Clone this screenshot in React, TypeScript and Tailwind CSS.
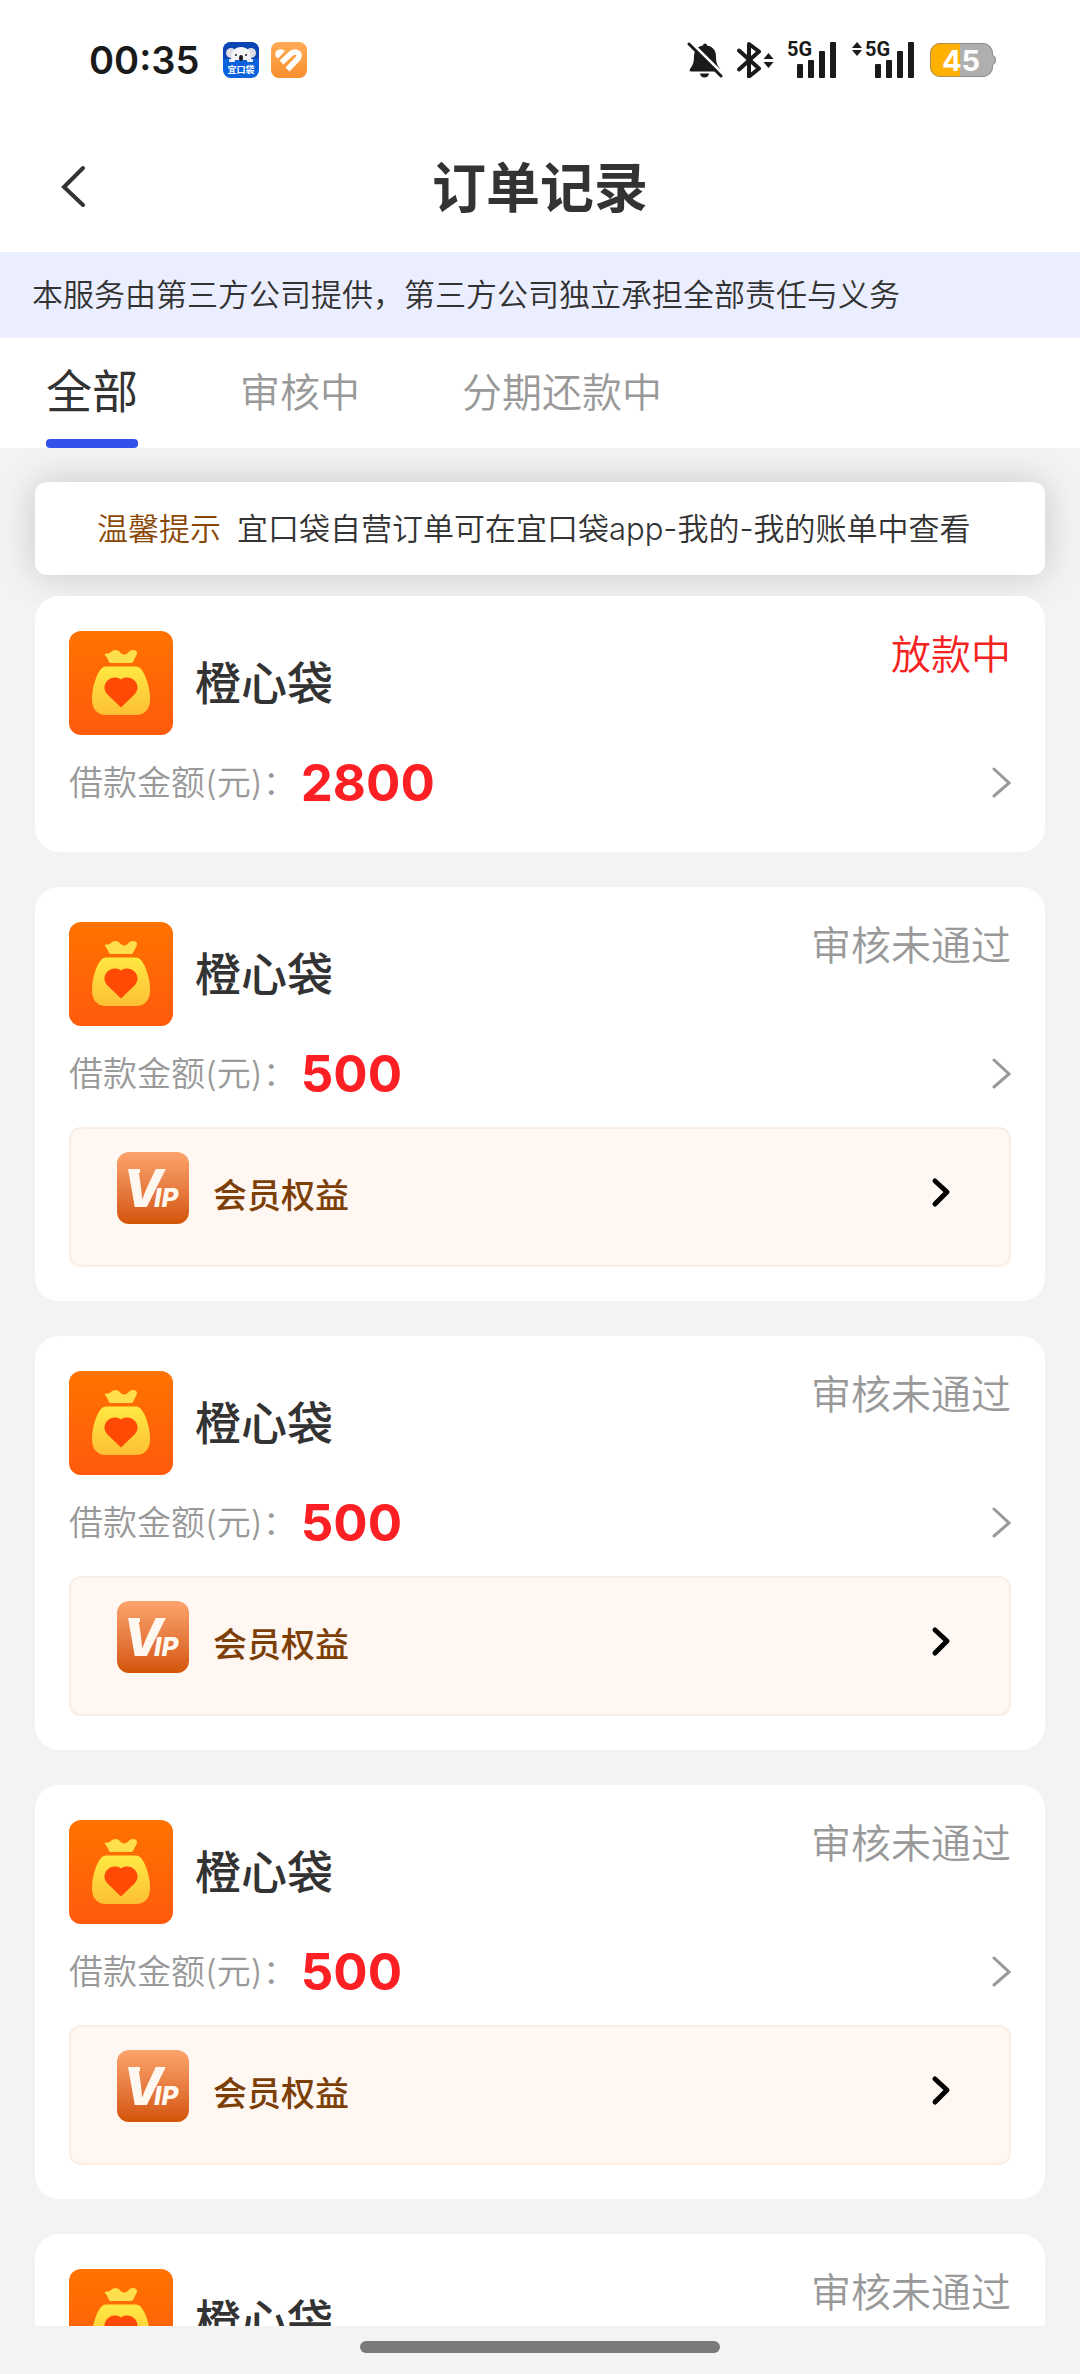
type Order = {
  id: number;
  name: string;
  status: string;
  amount: number;
  pending?: boolean;
  vip?: boolean;
};

const orders: Order[] = [
  { id: 1, name: "橙心袋", status: "放款中", amount: 2800, pending: true },
  { id: 2, name: "橙心袋", status: "审核未通过", amount: 500, vip: true },
  { id: 3, name: "橙心袋", status: "审核未通过", amount: 500, vip: true },
  { id: 4, name: "橙心袋", status: "审核未通过", amount: 500, vip: true },
  { id: 5, name: "橙心袋", status: "审核未通过", amount: 500, vip: true },
];

const tabs = ["全部", "审核中", "分期还款中"];

function PocketAppIcon() {
  return (
    <svg className="size-9" viewBox="0 0 36 36">
      <rect width="36" height="36" rx="8" fill="#0a62dc" />
      <path d="M0 17V8a8 8 0 0 1 8-8h20a8 8 0 0 1 8 8v9z" fill="#0b45b4" />
      <circle cx="8" cy="11" r="5" fill="#dcdce2" />
      <circle cx="28" cy="11" r="5" fill="#dcdce2" />
      <path d="M8 18c0-8 3-13 10-13s10 5 10 13z" fill="#f4f4f7" />
      <rect x="6" y="17" width="6" height="3" rx="1" fill="#f4f4f7" />
      <rect x="24" y="17" width="6" height="3" rx="1" fill="#f4f4f7" />
      <ellipse cx="18" cy="16" rx="2" ry="3" fill="#1b1b22" />
      <circle cx="13" cy="13" r="1" fill="#1b1b22" />
      <circle cx="23" cy="13" r="1" fill="#1b1b22" />
      <text x="18" y="31" fontSize="9" fontWeight="700" fill="#fff" textAnchor="middle">
        宜口袋
      </text>
    </svg>
  );
}

function HeartAppIcon() {
  return (
    <svg className="size-9" viewBox="0 0 36 36">
      <defs>
        <linearGradient id="heart-bg" x1="0" y1="0" x2="0" y2="1">
          <stop offset="0" stopColor="#ffab55" />
          <stop offset="1" stopColor="#f98f2f" />
        </linearGradient>
      </defs>
      <rect width="36" height="36" rx="8" fill="url(#heart-bg)" />
      <path d="M5 15Q3 11 6 8.500Q10 6 14 9L7 16.500Z" fill="#fff" />
      <path
        d="M10.500 20.500L19 12.500C24 7.500 31 11.500 27 16.500L16.500 27.500"
        fill="none"
        stroke="#fff"
        strokeWidth="5.500"
        strokeLinejoin="round"
      />
    </svg>
  );
}

function BellOffIcon() {
  return (
    <svg className="h-9 w-9" viewBox="0 0 36 36" fill="#1a1a1a">
      <path d="M18 1.500a2 2 0 0 1 2 2C26 4.500 29 9 29 14.500c0 7 1.500 9 4 12.500q1 2.500-1 2.500H4q-2 0-1-2.500c2.500-3.500 4-6 4-12.500C7 9 10 4.500 16 3.500a2 2 0 0 1 2-2z" />
      <path d="M13 31.500h9a4.500 4 0 0 1-9 0z" />
      <path d="M3.500 0L36 32" stroke="#fff" strokeWidth="3" />
      <path d="M2 2l32 32" stroke="#1a1a1a" strokeWidth="3" strokeLinecap="round" />
      <path d="M0 4.500L6 10.500V17L0 22z" fill="#fff" />
    </svg>
  );
}

function BluetoothIcon() {
  return (
    <svg className="h-9 w-[37px]" viewBox="0 0 37 36">
      <path
        d="M2 8.500l20 18L12 34.500V2l10 7.500L2 27.500"
        fill="none"
        stroke="#1a1a1a"
        strokeWidth="4"
        strokeLinecap="round"
        strokeLinejoin="round"
      />
      <path d="M31.500 11l5 6h-10zM31.500 26l5-6h-10z" fill="#1a1a1a" />
    </svg>
  );
}

function SignalIcon({ arrows = false }: { arrows?: boolean }) {
  return (
    <svg className="h-[38px] w-[62px] overflow-visible" viewBox="0 0 62 38" fill="#1a1a1a">
      {arrows && <path d="M5 1l5 6H0zM5 15l5-6H0z" />}
      <text x="13" y="15" fontFamily="Roboto" fontSize="20" fontWeight="700">
        5G
      </text>
      <rect x="23" y="23" width="6" height="14" rx="1" />
      <rect x="34" y="19" width="6" height="18" rx="1" />
      <rect x="45" y="10" width="6" height="27" rx="1" />
      <rect x="56" y="1" width="6" height="36" rx="1" />
    </svg>
  );
}

function BatteryIcon() {
  return (
    <svg className="h-[34px] w-[66px]" viewBox="0 0 66 34">
      <path d="M10 0h20v34H10A10 10 0 0 1 0 24V10A10 10 0 0 1 10 0z" fill="#ffb000" />
      <path d="M30 0h23a10 10 0 0 1 10 10v2q3 1 3 5t-3 5v2a10 10 0 0 1-10 10H30z" fill="#afafaf" />
      <path
        d="M10 .5h43A9.500 9.500 0 0 1 62.500 10v2q3 1 3 5t-3 5v2A9.500 9.500 0 0 1 53 33.500H10A9.500 9.500 0 0 1 .5 24V10A9.500 9.500 0 0 1 10 .5z"
        fill="none"
        stroke="#777"
        strokeOpacity=".6"
      />
      <text x="31" y="28" fontFamily="Inter" fontSize="29" fontWeight="700" fill="#fff" textAnchor="middle">
        45
      </text>
    </svg>
  );
}

function StatusBar() {
  return (
    <div className="flex h-[120px] shrink-0 items-center justify-between pr-[84px] pl-[89px]">
      <div className="flex items-center gap-3">
        <span className="w-[122px] text-[38px] font-semibold text-[#1a1a1a]">00:35</span>
        <PocketAppIcon />
        <HeartAppIcon />
      </div>
      <div className="flex items-center">
        <BellOffIcon />
        <span className="ml-3.5 flex">
          <BluetoothIcon />
        </span>
        <SignalIcon />
        <span className="ml-4 flex">
          <SignalIcon arrows />
        </span>
        <span className="ml-4 flex">
          <BatteryIcon />
        </span>
      </div>
    </div>
  );
}

function PocketLogo() {
  return (
    <svg className="size-[104px] rounded-xl" viewBox="0 0 104 104">
      <defs>
        <linearGradient id="pocket-bg" x1="0" y1="0" x2="0" y2="1">
          <stop offset="0" stopColor="#ff7300" />
          <stop offset="1" stopColor="#ff5a0c" />
        </linearGradient>
        <linearGradient id="pocket-bag" x1="0" y1="0" x2="0" y2="1">
          <stop offset="0" stopColor="#ffe943" />
          <stop offset="1" stopColor="#fdbf35" />
        </linearGradient>
      </defs>
      <rect width="104" height="104" fill="url(#pocket-bg)" />
      <path
        d="M36 24Q35 22.500 37 22.500C42 23 42 19 47 19C51 19 51 23.500 55 23.500C60 23.500 59 19 64 19C68 19 69 22 67 25L64 31Q63.500 32 62 32H42Q40.500 32 40 31Q38 26 36 24Z"
        fill="#ffdf4e"
      />
      <path
        d="M37 35.500H67Q69.500 35.500 71 37C77 43 81 57 81 68C81 78 76 84 67 84H37C28 84 23 78 23 68C23 57 27 43 33 37Q34.500 35.500 37 35.500Z"
        fill="url(#pocket-bag)"
      />
      <path
        d="M52 48.500C56 45.500 62 46 66 50C70 55 69 60 65 64L52 76.500L39 64C35 60 34 55 38 50C42 46 48 45.500 52 48.500Z"
        fill="#ff4a06"
      />
    </svg>
  );
}

function VipIcon() {
  return (
    <svg
      className="size-[72px] rounded-xl bg-linear-to-b from-[#fca46c] to-[#d35400]"
      viewBox="0 0 72 72"
      fill="#fff8f0"
      fontFamily="Inter"
      fontStyle="italic"
    >
      <rect x="12" y="17" width="11" height="4" />
      <text x="6" y="55" fontSize="52" fontWeight="800">
        V
        <tspan dx="-9" fontSize="26">
          IP
        </tspan>
      </text>
    </svg>
  );
}

function OrderCard({ order }: { order: Order }) {
  return (
    <li className={`rounded-3xl bg-white px-[34px] pt-[35px] ${order.vip ? "pb-[34px]" : "pb-10"}`}>
      <div className="flex items-center">
        <PocketLogo />
        <h2 className="ml-[22px] text-[46px] leading-none font-medium text-[#333]">{order.name}</h2>
        <span
          className={`ml-auto self-start text-[40px] leading-[48px] font-[350] ${order.pending ? "text-[#f52222]" : "text-[#999]"}`}
        >
          {order.status}
        </span>
      </div>
      <a href="#detail" className="mt-[17px] flex h-[60px] items-center">
        <span className="text-[34px] font-[350] text-[#999]">借款金额(元)：</span>
        <span className="ml-1 text-[51px] leading-none font-bold text-[#fc2024]">{order.amount}</span>
        <svg className="ml-auto h-8 w-5" viewBox="0 0 20 32" fill="none" stroke="#999" strokeWidth="3">
          <path d="M3 3l15 14L3 30" strokeLinecap="round" />
        </svg>
      </a>
      {order.vip && (
        <button
          type="button"
          className="mt-6 flex h-[140px] w-full items-start rounded-xl border-2 border-[#faede4] bg-[#fff7f1] pt-[23px] pr-[58px] pl-[46px]"
        >
          <VipIcon />
          <span className="mt-5 ml-6 text-[34px] leading-[48px] font-medium text-[#7d3f08]">会员权益</span>
          <svg className="mt-6 ml-auto h-8 w-5" viewBox="0 0 20 32" fill="none" stroke="#000" strokeWidth="5">
            <path d="M4 5l12 11L4 28" strokeLinecap="round" strokeLinejoin="round" />
          </svg>
        </button>
      )}
    </li>
  );
}

export default function App() {
  return (
    <div className="flex h-screen flex-col overflow-hidden bg-[#f3f3f3] font-['Inter','Noto_Sans_CJK_SC',sans-serif]">
      <header className="shrink-0 bg-white">
        <StatusBar />
        <div className="grid h-[132px] grid-cols-[100px_1fr_100px] items-center">
          <button type="button" aria-label="返回" className="flex justify-end pr-3">
            <svg className="h-11 w-7" viewBox="0 0 28 44" fill="none" stroke="#333" strokeWidth="4">
              <path d="M23 4L4 23l19 18" strokeLinecap="round" />
            </svg>
          </button>
          <h1 className="pt-1 text-center text-[54px] font-bold text-[#333]">订单记录</h1>
        </div>
        <p className="bg-[#ebeefe] px-8 py-5 text-[31px] leading-[46px] font-[350] text-[#333]">
          本服务由第三方公司提供，第三方公司独立承担全部责任与义务
        </p>
        <nav className="flex h-[110px] gap-[102px] px-[46px]">
          {tabs.map((tab, i) => (
            <button
              key={tab}
              type="button"
              className={`flex flex-col items-center justify-between ${i === 0 ? "text-[46px] text-[#333]" : "text-[40px] font-[350] text-[#999]"}`}
            >
              <span className={i === 0 ? "leading-[106px]" : "leading-[110px]"}>{tab}</span>
              {i === 0 && <span className="-mt-[5px] h-[9px] w-full shrink-0 rounded bg-[#3350ea]" />}
            </button>
          ))}
        </nav>
      </header>

      <main className="min-h-0 flex-1 overflow-hidden px-[35px] pt-[34px]">
        <p className="rounded-xl bg-white px-[62px] py-[23px] text-[31px] leading-[47px] font-[350] whitespace-nowrap text-[#333] shadow-[0_0_36px_rgba(0,0,0,0.18)]">
          <span className="mr-4 text-[#8a4806]">温馨提示</span>
          宜口袋自营订单可在宜口袋app-我的-我的账单中查看
        </p>
        <ul className="relative mt-[21px] flex flex-col gap-[35px]">
          {orders.map((order) => (
            <OrderCard key={order.id} order={order} />
          ))}
        </ul>
      </main>

      <footer className="flex h-12 shrink-0 justify-center pt-[15px]">
        <div className="h-3 w-1/3 rounded-full bg-[#7a7a7a]" />
      </footer>
    </div>
  );
}
